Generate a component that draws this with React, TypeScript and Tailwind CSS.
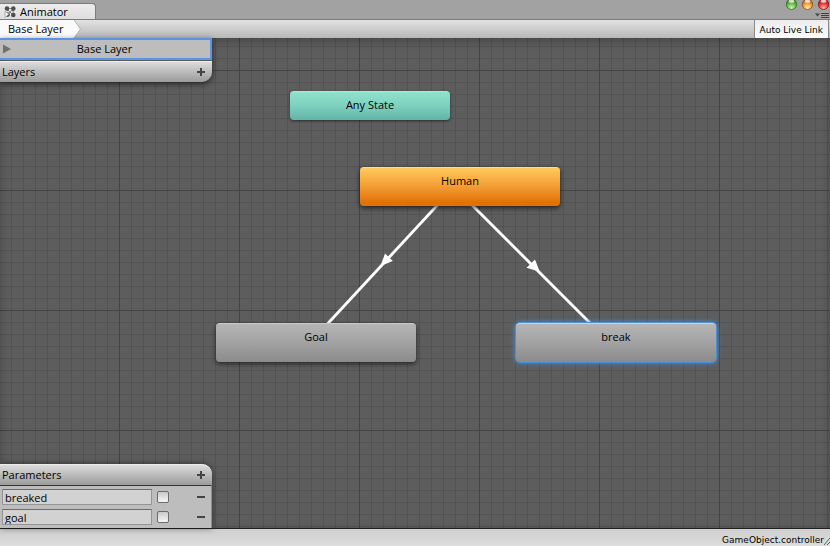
import { useState } from "react";
import clsx from "clsx";

const nodes = [
  {
    name: "Any State",
    place: "left-[290px] top-[53px] h-[29px] w-[160px]",
    look: "from-[#8fe3cd] via-[#7dd0bd] to-[#62b3a8] border-t-[#a5ebd8] shadow-[0_1px_3px_rgba(0,0,0,0.55)]",
  },
  {
    name: "Human",
    place: "left-[360px] top-[129px] h-[39px] w-[200px]",
    look: "from-[#ffc95b] via-[#f4a136] via-45% to-[#e37002] to-90% border-t-[#ffdc8f] shadow-[0_2px_5px_rgba(0,0,0,0.65)]",
  },
  {
    name: "Goal",
    place: "left-[216px] top-[285px] h-[39px] w-[200px]",
    look: "from-[#b5b5b5] via-[#a2a2a2] to-[#8b8b8b] border-t-[#c9c9c9] shadow-[0_2px_5px_rgba(0,0,0,0.6)]",
  },
  {
    name: "break",
    place: "left-[516px] top-[285px] h-[39px] w-[200px]",
    look: "from-[#b5b5b5] via-[#a2a2a2] to-[#8b8b8b] border-t-[#c9d8e6] shadow-[0_0_0_1px_#4a90d6,0_0_5px_1px_#3f8fe0]",
  },
];

function AnimatorIcon() {
  return (
    <svg width="12" height="12" viewBox="0 0 12 12" aria-hidden="true">
      <path d="M3 3 9 9M9 3 5 7M3 2.500H9M9 3V9" stroke="#8a8a8a" strokeWidth="1" />
      <g fill="#4f4f4f">
        <circle cx="3" cy="2.600" r="2.300" />
        <circle cx="9.300" cy="2.600" r="2.300" />
        <circle cx="9.300" cy="9" r="2.300" />
        <circle cx="3.600" cy="8.600" r="2.300" />
      </g>
      <path d="M1 5.500 5 8 1 11.500Z" fill="#f6f6f6" stroke="#8a8a8a" strokeWidth="0.600" />
    </svg>
  );
}

function WindowLights() {
  const lights = [
    { id: "green", dark: "#2f6d22", mid: "#63b944", light: "#d3f7b0" },
    { id: "amber", dark: "#8f4a14", mid: "#ee9a35", light: "#fff0a4" },
    { id: "red", dark: "#8d1214", mid: "#e8322f", light: "#ffb3a8" },
  ];
  return (
    <svg width="46" height="12" viewBox="0 0 46 12" aria-hidden="true">
      {lights.map((l, i) => (
        <g key={l.id}>
          <defs>
            <radialGradient id={l.id} cx="0.5" cy="0.85" r="0.85">
              <stop offset="0" stopColor={l.light} />
              <stop offset="0.55" stopColor={l.mid} />
              <stop offset="1" stopColor={l.dark} />
            </radialGradient>
          </defs>
          <circle cx={7.5 + i * 16} cy="4.300" r="5.200" fill={`url(#${l.id})`} stroke={l.dark} strokeWidth="0.800" />
          <ellipse cx={7.5 + i * 16} cy="1.200" rx="2.800" ry="1.500" fill="#fff" opacity="0.75" />
        </g>
      ))}
    </svg>
  );
}

function PlusIcon() {
  return (
    <svg width="8" height="8" viewBox="0 0 8 8" aria-hidden="true">
      <path d="M4 0V8M0 4H8" stroke="#444" strokeWidth="2" />
    </svg>
  );
}

function PanelHeader({ title, className }: { title: string; className: string }) {
  return (
    <div
      className={clsx(
        "flex h-[21px] items-center justify-between bg-linear-to-b from-[#dcdcdc] to-[#9b9b9b] pr-[7px] pl-[2px]",
        className
      )}
    >
      <h2>{title}</h2>
      <button aria-label={`Add to ${title}`}>
        <PlusIcon />
      </button>
    </div>
  );
}

function ParameterRow({ name }: { name: string }) {
  const [value, setValue] = useState(name);
  return (
    <li className="flex h-5 items-center pr-[6px] pl-[2px]">
      <input
        type="text"
        aria-label={`${name} name`}
        value={value}
        onChange={(e) => setValue(e.target.value)}
        className="h-4 w-[150px] border border-[#949494] border-t-[#6a6a6a] bg-[#d2d2d2] px-[2px] leading-[14px] outline-none"
      />
      <input
        type="checkbox"
        aria-label={`${name} value`}
        className="ml-[5px] size-3 appearance-none rounded-[2px] border border-[#6b6b6b] bg-linear-to-b from-[#c9c9c9] to-[#f6f6f6] checked:from-[#555] checked:to-[#777]"
      />
      <button aria-label={`Remove ${name}`} className="ml-auto">
        <svg width="8" height="8" viewBox="0 0 8 8" aria-hidden="true">
          <path d="M0 4H8" stroke="#444" strokeWidth="2" />
        </svg>
      </button>
    </li>
  );
}

function Graph() {
  return (
    <div className="absolute inset-0">
      {/* minor grid every 12px, major every 120px */}
      <svg className="absolute inset-0 size-full" aria-hidden="true">
        <defs>
          <pattern id="minor" x="11" y="8" width="12" height="12" patternUnits="userSpaceOnUse">
            <path d="M0.500 0V12M0 0.500H12" stroke="#535353" />
          </pattern>
          <pattern id="major" x="119" y="32" width="120" height="120" patternUnits="userSpaceOnUse">
            <path d="M0.500 0V120M0 0.500H120" stroke="#444" />
          </pattern>
        </defs>
        <rect width="100%" height="100%" fill="url(#minor)" />
        <rect width="100%" height="100%" fill="url(#major)" />
        <g stroke="#fff" strokeWidth="2.800">
          <path d="M444 160 320 294" />
          <path d="M465 160 599 294" />
        </g>
        <g fill="#fff">
          <path d="M380.500 228 385 215.500 392.800 223Z" />
          <path d="M539.800 233.800 535 221.500 526.500 229.800Z" />
        </g>
      </svg>
      <div className="pointer-events-none absolute inset-0 shadow-[inset_0_3px_8px_rgba(0,0,0,0.25)]" />
      {nodes.map((n) => (
        <button
          key={n.name}
          className={clsx(
            "absolute flex justify-center rounded border-t bg-linear-to-b pt-[5px] leading-4",
            n.place,
            n.look
          )}
        >
          {n.name}
        </button>
      ))}
    </div>
  );
}

export default function App() {
  return (
    <div className="flex min-h-screen flex-col bg-[#a2a2a2] font-['Open_Sans','Noto_Sans',sans-serif] text-[11px] leading-4 text-black">
      <header className="flex h-[19px] justify-between">
        <button className="mt-[3px] flex w-24 items-center gap-1 rounded-tr border-t border-r border-[#7c7c7c] bg-linear-to-b from-[#ececec] to-[#dedede] pt-px pl-1">
          <AnimatorIcon />
          Animator
        </button>
        <div className="flex flex-col items-end">
          <WindowLights />
          <button aria-label="Tab menu" className="pr-px">
            <svg width="14" height="6" viewBox="0 0 14 6" className="block" aria-hidden="true">
              <path d="M0 1.500H5L2.500 4.500Z" fill="#444" />
              <path d="M6 1.500H14M6 3.500H14M6 5.500H14" stroke="#444" />
            </svg>
          </button>
        </div>
      </header>

      <nav className="flex h-[19px] justify-between border-t border-[#7c7c7c] bg-linear-to-b from-[#e2e2e2] to-[#b8b8b8]">
        <button className="flex h-[18px]">
          <span className="flex h-full items-center bg-linear-to-b from-[#f8f8f8] to-[#fdfdfd] px-2">Base Layer</span>
          <svg width="10" height="18" viewBox="0 0 10 18" aria-hidden="true">
            <path d="M0 0H2L8.500 9 2 18H0Z" fill="#fafafa" />
            <path d="M2 0 8.500 9 2 18" fill="none" stroke="#b0b0b0" />
          </svg>
        </button>
        <button className="mr-px border-x border-[#8a8a8a] bg-linear-to-b from-[#ececec] to-[#fcfcfc] px-[5px] pt-px font-['DejaVu_Sans',sans-serif] text-[9px]">
          Auto Live Link
        </button>
      </nav>

      <main className="relative flex flex-1 border-b border-[#222] bg-[#5d5d5d]">
        <Graph />
        <aside className="relative flex w-[212px] flex-col justify-between">
          <section className="rounded-br-[10px] shadow-[0_2px_6px_rgba(0,0,0,0.6)]">
            <button className="flex h-[22px] w-full items-center border-2 border-l-0 border-[#5b93e6] bg-[#bdbdbd] pl-[3px]">
              <svg width="8" height="10" viewBox="0 0 8 10" aria-hidden="true">
                <path d="M0 0.500 8 5 0 9.500Z" fill="#707070" />
              </svg>
              <span className="flex-1 pr-3 text-center">Base Layer</span>
            </button>
            <PanelHeader title="Layers" className="mt-px rounded-br-[10px] border-t border-[#ededed]" />
          </section>
          <section className="rounded-tr-[10px] bg-[#bdbdbd] shadow-[0_0_6px_rgba(0,0,0,0.5)]">
            <PanelHeader title="Parameters" className="rounded-tr-[10px] border-t border-[#ededed]" />
            <ul className="border-t border-r border-t-[#333] border-r-[#8f8f8f] py-px">
              <ParameterRow name="breaked" />
              <ParameterRow name="goal" />
            </ul>
          </section>
        </aside>
      </main>

      <footer className="flex h-[17px] items-end justify-end bg-linear-to-b from-[#cfcfcf] to-[#dcdcdc] font-['DejaVu_Sans',sans-serif] text-[9px] leading-3">
        <span>GameObject.controller</span>
        <svg width="6" height="9" viewBox="0 0 6 9" aria-hidden="true">
          <path d="M0 8 6 1M3 8 6 5" stroke="#666" />
        </svg>
      </footer>
    </div>
  );
}
